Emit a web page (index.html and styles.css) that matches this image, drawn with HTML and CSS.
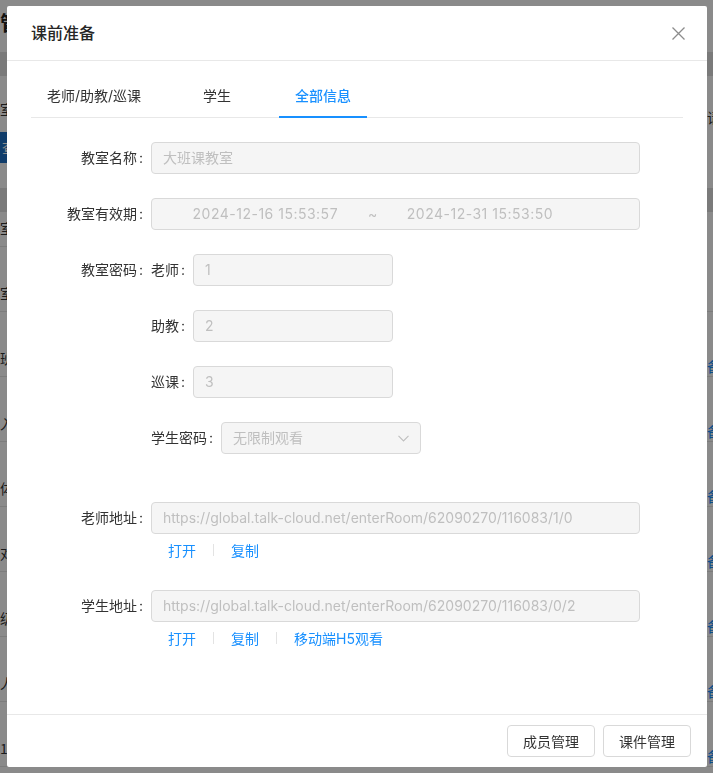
FILE: index.html
```html
<!DOCTYPE html>
<html>
	<head>
		<meta charset="utf-8">
		<title>课前准备</title>
		<link rel="stylesheet" href="styles.css">
	</head>
	<body>
		<!-- 底层页面 -->
		<div class="page">
			<div class="page-head"><span class="cell-l big">管</span></div>
			<div class="page-band"></div>
			<div class="page-filter"><span class="cell-l">室</span><span class="cell-r">请</span></div>
			<div class="page-btns"><span class="page-btn">查询</span></div>
			<div class="page-gap"></div>
			<div class="page-band"></div>
			<div class="page-row short"><span class="cell-l">室</span></div>
			<div class="page-row"><span class="cell-l">室</span></div>
			<div class="page-row"><span class="cell-l">班</span><span class="cell-r link">备</span></div>
			<div class="page-row"><span class="cell-l">入</span><span class="cell-r link">备</span></div>
			<div class="page-row"><span class="cell-l">体</span><span class="cell-r link">备</span></div>
			<div class="page-row"><span class="cell-l">对</span><span class="cell-r link">备</span></div>
			<div class="page-row"><span class="cell-l">级</span><span class="cell-r link">备</span></div>
			<div class="page-row"><span class="cell-l">人</span><span class="cell-r link">备</span></div>
			<div class="page-row"><span class="cell-l">1</span><span class="cell-r link">备</span></div>
		</div>
		<div class="mask"></div>

		<!-- 弹窗 -->
		<div class="modal-wrap">
			<div class="modal">
				<div class="modal-header">
					<span class="modal-title">课前准备</span>
					<svg class="modal-close" width="13" height="13" viewBox="0 0 13 13">
						<path d="M0.5 0.5L12.5 12.5M12.5 0.5L0.5 12.5" stroke="#8c8c8c" stroke-width="1.3" fill="none"/>
					</svg>
				</div>
				<div class="modal-body">
					<ul class="tabs">
						<li class="tab">老师/助教/巡课</li>
						<li class="tab">学生</li>
						<li class="tab active">全部信息</li>
					</ul>
					<div class="form">
						<div class="form-item">
							<label class="label">教室名称</label>
							<div class="input wide">大班课教室</div>
						</div>
						<div class="form-item">
							<label class="label">教室有效期</label>
							<div class="input wide range">
								<span class="range-part">2024-12-16 15:53:57</span>
								<span class="range-sep">~</span>
								<span class="range-part">2024-12-31 15:53:50</span>
							</div>
						</div>
						<div class="form-item top pwd">
							<label class="label">教室密码</label>
							<div class="sub-list">
								<div class="sub-item">
									<span class="sub-label">老师</span>
									<div class="input short">1</div>
								</div>
								<div class="sub-item">
									<span class="sub-label">助教</span>
									<div class="input short">2</div>
								</div>
								<div class="sub-item">
									<span class="sub-label">巡课</span>
									<div class="input short">3</div>
								</div>
								<div class="sub-item">
									<span class="sub-label">学生密码</span>
									<div class="input short select">
										<span>无限制观看</span>
										<svg width="11" height="7" viewBox="0 0 11 7">
											<path d="M0.5 0.8L5.5 6L10.5 0.8" stroke="#bfbfbf" stroke-width="1.1" fill="none"/>
										</svg>
									</div>
								</div>
							</div>
						</div>
						<div class="form-item top">
							<label class="label">老师地址</label>
							<div class="addr">
								<div class="input wide">https://global.talk-cloud.net/enterRoom/62090270/116083/1/0</div>
								<div class="links">
									<a href="#">打开</a><i class="sep"></i><a href="#">复制</a>
								</div>
							</div>
						</div>
						<div class="form-item top">
							<label class="label">学生地址</label>
							<div class="addr">
								<div class="input wide">https://global.talk-cloud.net/enterRoom/62090270/116083/0/2</div>
								<div class="links">
									<a href="#">打开</a><i class="sep"></i><a href="#">复制</a><i class="sep"></i><a href="#">移动端H5观看</a>
								</div>
							</div>
						</div>
					</div>
				</div>
				<div class="modal-footer">
					<button class="btn">成员管理</button>
					<button class="btn">课件管理</button>
				</div>
			</div>
		</div>
	</body>
</html>
```

FILE: styles.css
```css
*{
	margin: 0;
	padding: 0;
	box-sizing: border-box;
}
ul{
	list-style: none;
}
a{
	text-decoration: none;
}
body{
	width: 713px;
	height: 773px;
	overflow: hidden;
	background: #fff;
	font-family: "Inter", "Noto Sans CJK SC", sans-serif;
	font-size: 14px;
	color: #333;
}

/* 底层页面 */
.page{
	width: 713px;
	font-family: "Noto Sans CJK SC", sans-serif;
	color: #333;
}
.page-head{
	height: 52px;
	display: flex;
	align-items: center;
}
.big{
	font-size: 20px;
	font-weight: 700;
	color: #222;
}
.page-band{
	height: 24px;
	background: #e2e2e2;
}
.page-filter{
	height: 56px;
	display: flex;
	align-items: flex-end;
	padding-bottom: 5px;
}
.page-btns{
	height: 31px;
}
.page-btn{
	display: block;
	width: 60px;
	height: 31px;
	line-height: 31px;
	background: #1f6fc5;
	color: #fff;
	padding-left: 2px;
}
.page-gap{
	height: 25px;
}
.page-row{
	height: 65px;
	display: flex;
	align-items: flex-end;
	border-bottom: 1px solid #e6e6e6;
}
.page-row.short{
	height: 35px;
}
.cell-l{
	margin-bottom: 8px;
	white-space: nowrap;
}
.cell-r{
	margin-left: auto;
	width: 6px;
	white-space: nowrap;
	margin-bottom: 0;
}
.cell-r.link{
	color: #1890ff;
}
.mask{
	position: fixed;
	top: 0;
	left: 0;
	right: 0;
	bottom: 0;
	background-color: rgba(0,0,0,.46);
}

/* 弹窗 */
.modal-wrap{
	position: fixed;
	top: 0;
	left: 0;
	right: 0;
	bottom: 0;
}
.modal{
	width: 700px;
	height: 761px;
	margin: 6px 0 0 7px;
	background: #fff;
	border-radius: 2px;
	display: flex;
	flex-direction: column;
}
.modal-header{
	display: flex;
	justify-content: space-between;
	align-items: center;
	height: 55px;
	padding: 0 22px 0 24px;
	border-bottom: 1px solid #e8e8e8;
}
.modal-title{
	font-size: 16px;
	line-height: 22px;
	font-weight: 500;
	color: #262626;
}
.modal-body{
	flex: 1;
	padding: 12px 24px 0;
}
.tabs{
	display: flex;
	border-bottom: 1px solid #e8e8e8;
}
.tab{
	padding: 12px 16px 10px;
	line-height: 21px;
	margin-right: 32px;
	margin-bottom: -1px;
	border-bottom: 2px solid transparent;
	color: #333;
}
.tab:first-child{
	margin-right: 30px;
}
.tab.active{
	color: #1890ff;
	font-weight: 500;
	border-bottom-color: #1890ff;
}
.form{
	margin-top: 24px;
}
.form-item{
	display: flex;
	align-items: center;
	margin-bottom: 24px;
}
.form-item.top{
	align-items: flex-start;
}
.form-item.pwd{
	margin-bottom: 48px;
}
.label{
	width: 120px;
	text-align: right;
	line-height: 32px;
	color: #333;
	white-space: nowrap;
}
.label::after,
.sub-label::after{
	content: ":";
	margin: 0 8px 0 2px;
}
.input{
	height: 32px;
	line-height: 30px;
	padding: 0 11px;
	border: 1px solid #d9d9d9;
	border-radius: 4px;
	background-color: #f5f5f5;
	color: #bfbfbf;
	white-space: nowrap;
	overflow: hidden;
}
.wide{
	width: 489px;
}
.short{
	width: 200px;
}
.range{
	display: flex;
}
.range-part{
	width: 44%;
	text-align: center;
	letter-spacing: 0.5px;
}
.range-sep{
	min-width: 10px;
	text-align: center;
}
.sub-item{
	display: flex;
	align-items: center;
	margin-bottom: 24px;
}
.sub-item:last-child{
	margin-bottom: 0;
}
.sub-label{
	line-height: 32px;
	color: #333;
}
.select{
	display: flex;
	justify-content: space-between;
	align-items: center;
}
.links{
	display: flex;
	align-items: center;
	height: 32px;
	padding-left: 17px;
}
.links a{
	color: #1890ff;
}
.sep{
	width: 1px;
	height: 12px;
	margin: 0 17px;
	background-color: #e3e3e3;
}
.modal-footer{
	display: flex;
	justify-content: flex-end;
	gap: 8px;
	height: 53px;
	padding: 10px 16px;
	border-top: 1px solid #e8e8e8;
}
.btn{
	height: 32px;
	padding: 0 15px;
	border: 1px solid #d9d9d9;
	border-radius: 4px;
	background: #fff;
	color: #333;
	font-family: "Noto Sans CJK SC", sans-serif;
	font-size: 14px;
}
```
